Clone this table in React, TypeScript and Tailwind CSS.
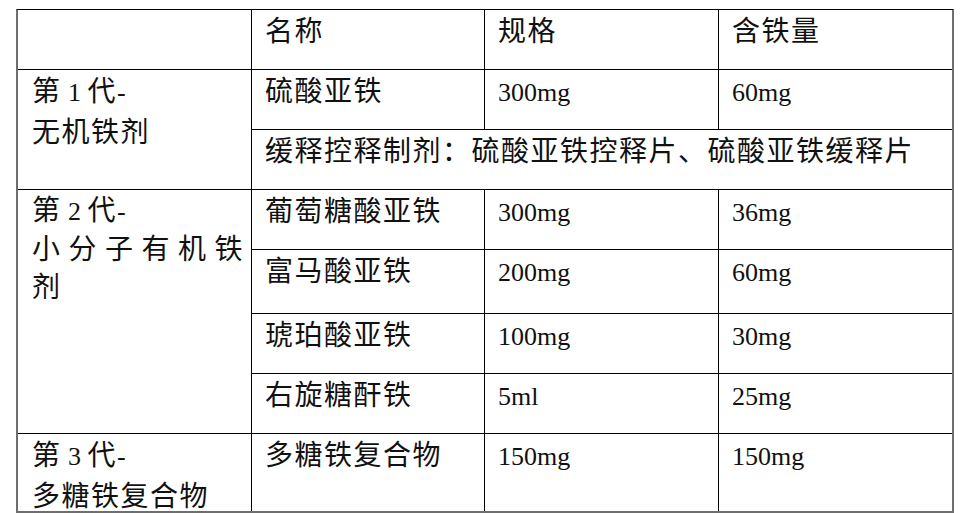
import React from 'react';

const L = ({ children }: { children: React.ReactNode }) => (
  <span className="text-[26px] tracking-normal">{children}</span>
);

const Cell = ({ className = '', children }: { className?: string; children?: React.ReactNode }) => (
  <div className={`bg-white pl-[13px] pt-[2px] ${className}`}>{children}</div>
);

const rows = [
  { name: '葡萄糖酸亚铁', spec: '300mg', iron: '36mg' },
  { name: '富马酸亚铁', spec: '200mg', iron: '60mg' },
  { name: '琥珀酸亚铁', spec: '100mg', iron: '30mg' },
  { name: '右旋糖酐铁', spec: '5ml', iron: '25mg' },
];

const App = () => {
  return (
    <div className="w-[969px] h-[513px] bg-white pt-[9px] pl-[16px] font-['Liberation_Serif','Noto_Sans_CJK_SC',serif] text-[#111]">
      <div className="w-[938px] border-t border-x-2 border-b-2 border-[#6e6e6e] border-t-black">
        <div className="grid grid-cols-[233px_232px_233px_233px] grid-rows-[59px_59px_59px_59px_63px_59px_59px_77px] gap-px bg-black text-[28px] leading-[40px] tracking-[1.5px]">
          {/* header */}
          <Cell />
          <Cell>名称</Cell>
          <Cell>规格</Cell>
          <Cell>含铁量</Cell>

          {/* gen 1 */}
          <Cell className="row-span-2 pl-[14px] pt-0">
            <div>第<L> 1 </L>代<L>-</L></div>
            <div>无机铁剂</div>
          </Cell>
          <Cell>硫酸亚铁</Cell>
          <Cell><L>300mg</L></Cell>
          <Cell><L>60mg</L></Cell>
          <Cell className="col-span-3">缓释控释制剂：硫酸亚铁控释片、硫酸亚铁缓释片</Cell>

          {/* gen 2 */}
          <Cell className="row-span-4 pl-[14px] pt-0 leading-[38px]">
            <div>第<L> 2 </L>代<L>-</L></div>
            <div className="tracking-[8.5px]">小分子有机铁</div>
            <div>剂</div>
          </Cell>
          {rows.map((r, i) => (
            <React.Fragment key={i}>
              <Cell>{r.name}</Cell>
              <Cell><L>{r.spec}</L></Cell>
              <Cell><L>{r.iron}</L></Cell>
            </React.Fragment>
          ))}

          {/* gen 3 */}
          <Cell className="pl-[14px] pt-0">
            <div>第<L> 3 </L>代<L>-</L></div>
            <div>多糖铁复合物</div>
          </Cell>
          <Cell>多糖铁复合物</Cell>
          <Cell><L>150mg</L></Cell>
          <Cell><L>150mg</L></Cell>
        </div>
      </div>
    </div>
  );
};

export default App;
